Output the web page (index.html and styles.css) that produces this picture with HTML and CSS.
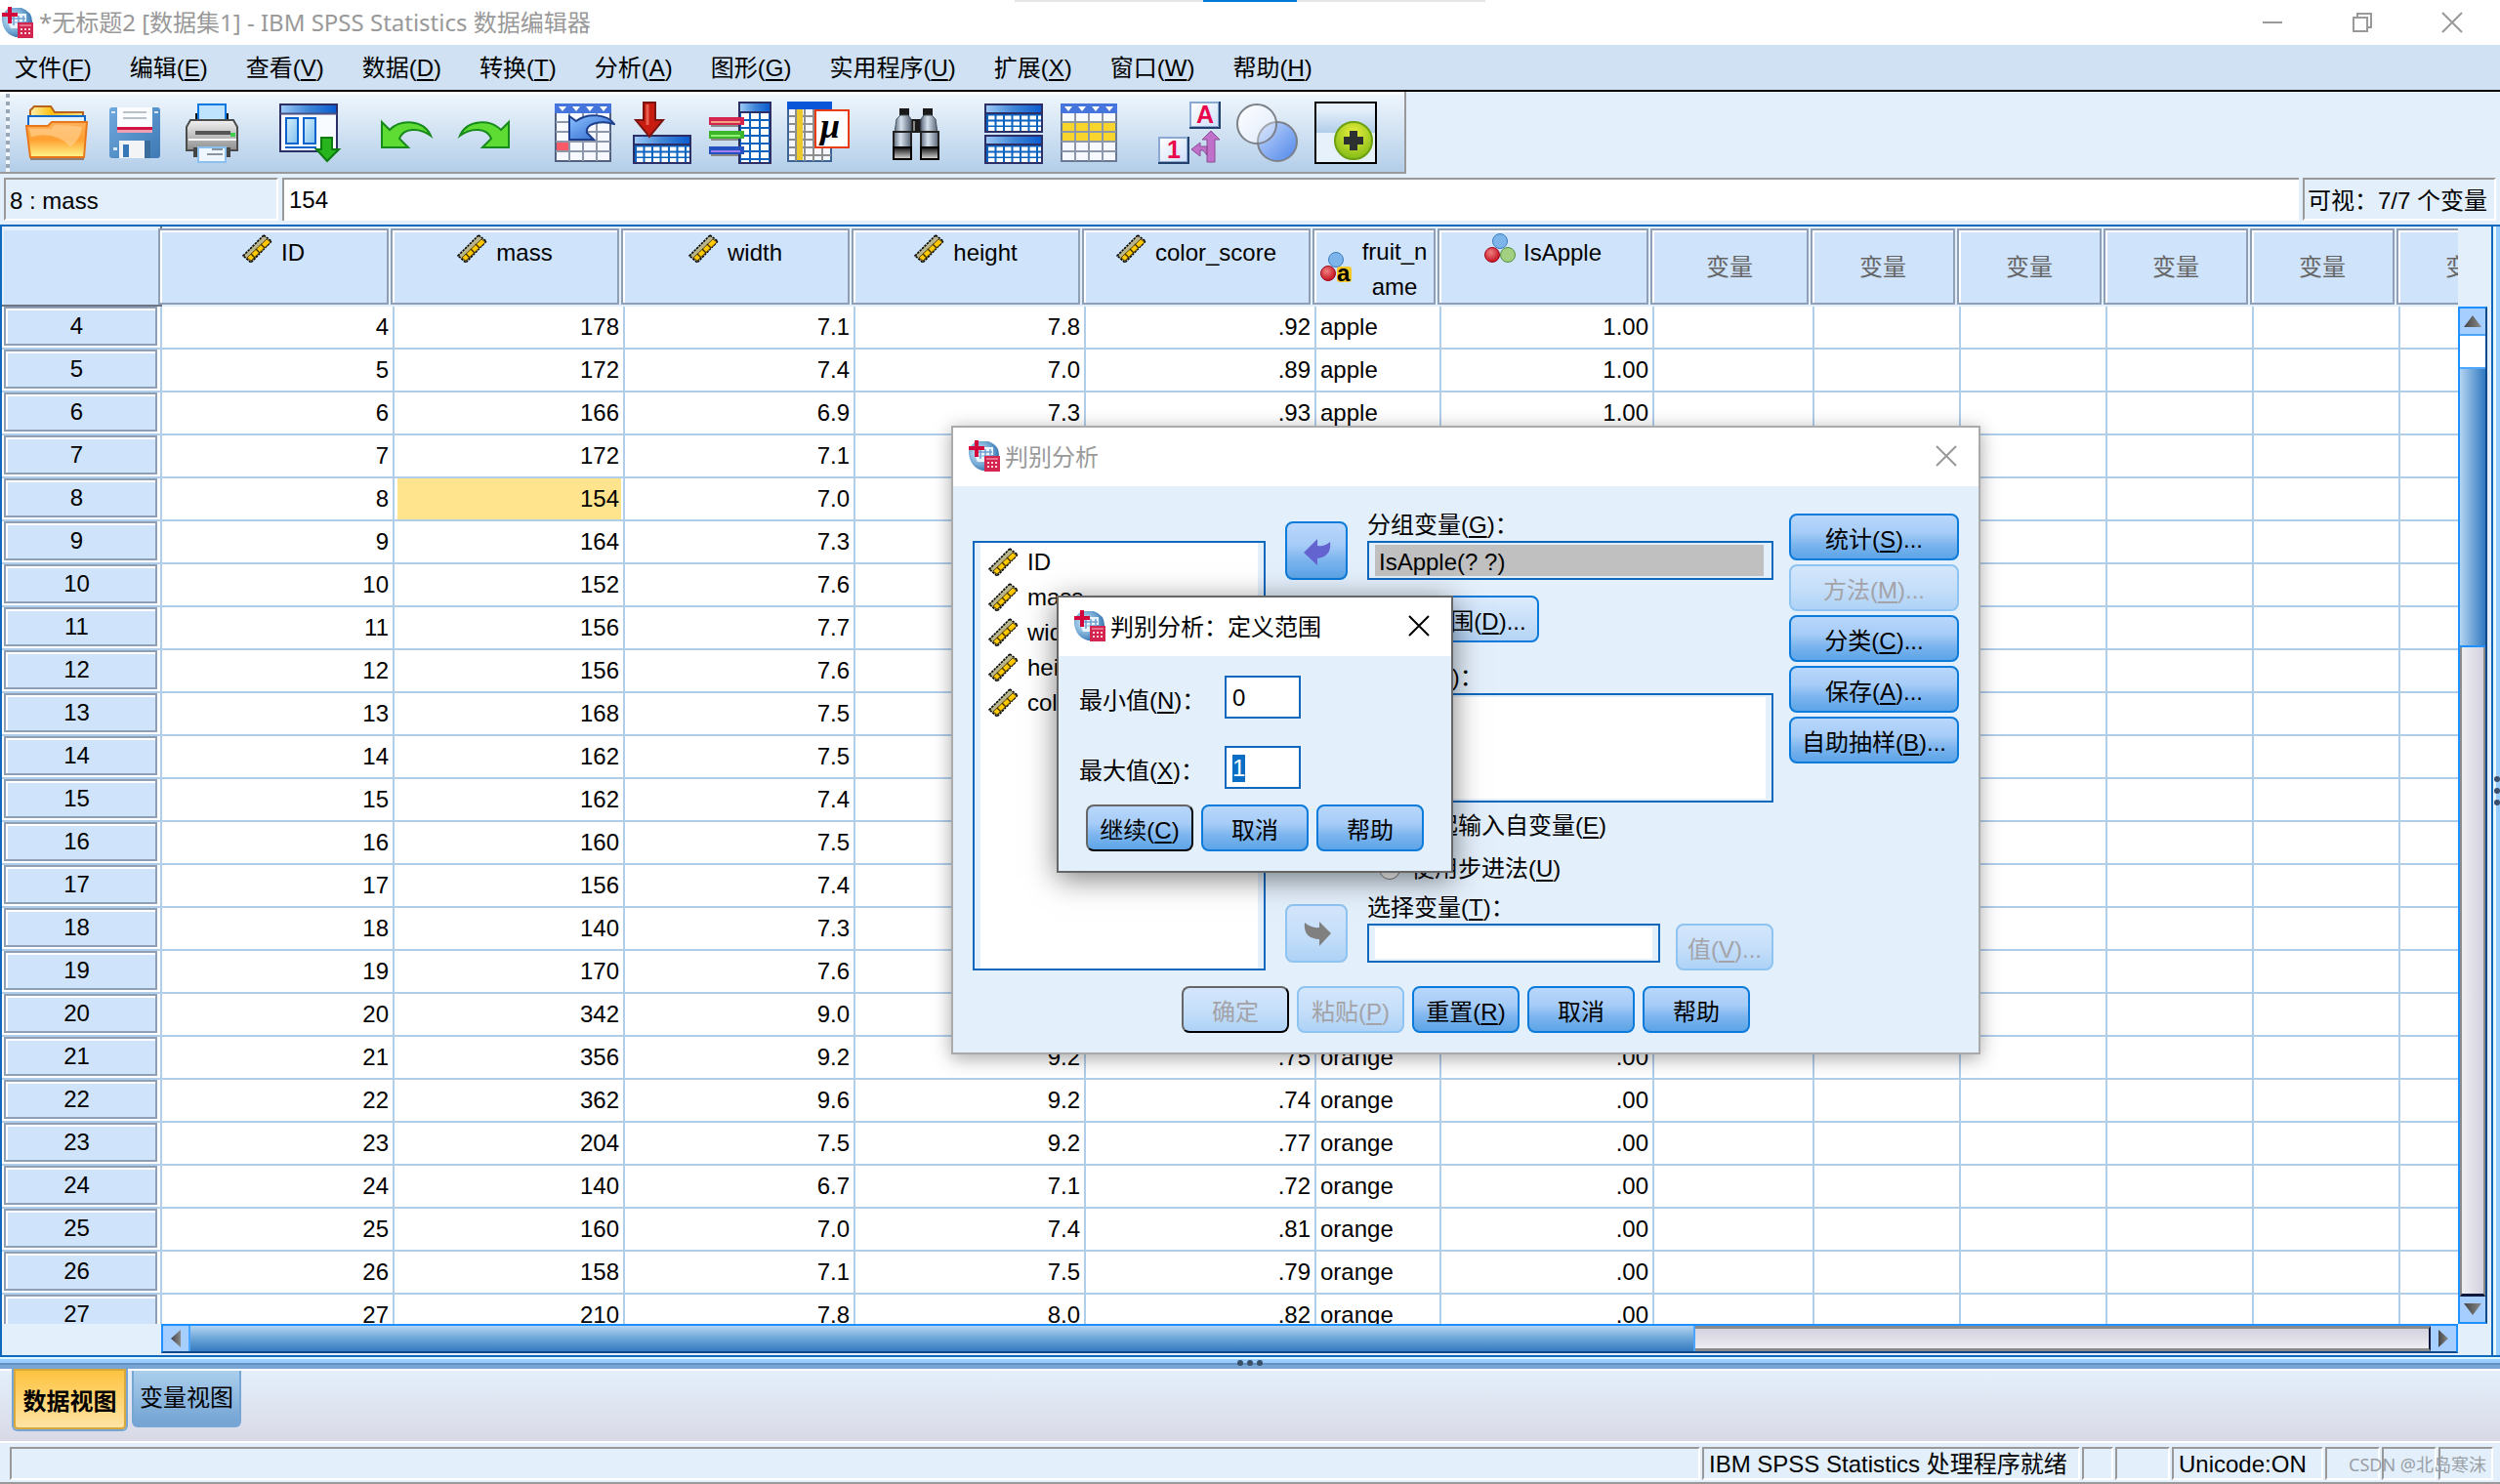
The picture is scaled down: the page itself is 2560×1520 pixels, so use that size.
FILE: index.html
```html
<!DOCTYPE html>
<html lang="zh-CN">
<head>
<meta charset="utf-8">
<title>*无标题2 [数据集1] - IBM SPSS Statistics 数据编辑器</title>
<link rel="stylesheet" href="styles.css">
</head>
<body>
<svg class="defs" aria-hidden="true">
  <defs>
    <linearGradient id="gHead" x1="0" y1="0" x2="1" y2="0"><stop offset="0" stop-color="#9cc8f6"/><stop offset=".5" stop-color="#3f86d8"/><stop offset="1" stop-color="#0a5cd0"/></linearGradient>
    <linearGradient id="gFolder" x1="0" y1="0" x2="0" y2="1"><stop offset="0" stop-color="#ffb05a"/><stop offset=".5" stop-color="#ffa030"/><stop offset="1" stop-color="#fff78c"/></linearGradient>
    <linearGradient id="gBack" x1="0" y1="0" x2="1" y2="0"><stop offset="0" stop-color="#fff0b0"/><stop offset=".4" stop-color="#ffc010"/><stop offset="1" stop-color="#ffe58a"/></linearGradient>
    <linearGradient id="gSave" x1="0" y1="0" x2="1" y2="1"><stop offset="0" stop-color="#6fa9dd"/><stop offset="1" stop-color="#3f79b5"/></linearGradient>
    <linearGradient id="gGrey" x1="0" y1="0" x2="0" y2="1"><stop offset="0" stop-color="#f2f2f2"/><stop offset="1" stop-color="#8e8e8e"/></linearGradient>
    <linearGradient id="gPane" x1="0" y1="0" x2="1" y2="1"><stop offset="0" stop-color="#d6effc"/><stop offset="1" stop-color="#7fc0ee"/></linearGradient>
    <linearGradient id="gTube" x1="0" y1="0" x2="1" y2="0"><stop offset="0" stop-color="#5d6a7c"/><stop offset=".4" stop-color="#d8e2ee"/><stop offset="1" stop-color="#566274"/></linearGradient>
    <linearGradient id="gEye" x1="0" y1="0" x2="0" y2="1"><stop offset="0" stop-color="#111"/><stop offset="1" stop-color="#ddd"/></linearGradient>
    <linearGradient id="gBlue" x1="0" y1="0" x2="1" y2="1"><stop offset="0" stop-color="#8fc2ff"/><stop offset="1" stop-color="#2260c8"/></linearGradient>
    <linearGradient id="gWhite" x1="0" y1="0" x2="1" y2="1"><stop offset="0" stop-color="#ffffff"/><stop offset="1" stop-color="#cfe0fa"/></linearGradient>
    <linearGradient id="gCirc" x1="0" y1="0" x2="1" y2="1"><stop offset="0" stop-color="#c4d8fb"/><stop offset="1" stop-color="#4f86ea"/></linearGradient>
    <linearGradient id="gSky" x1="0" y1="0" x2="0" y2="1"><stop offset="0" stop-color="#eaf3fc"/><stop offset="1" stop-color="#b0cdea"/></linearGradient>
    <linearGradient id="gArrow" x1="0" y1="0" x2="1" y2="0"><stop offset="0" stop-color="#444"/><stop offset="1" stop-color="#8a8a8a"/></linearGradient>
    <radialGradient id="gGlobe" cx=".35" cy=".4" r=".7"><stop offset="0" stop-color="#d8ecfa"/><stop offset=".6" stop-color="#6fa6d2"/><stop offset="1" stop-color="#2c6aa8"/></radialGradient>
    <radialGradient id="gLime" cx=".5" cy=".3" r=".7"><stop offset="0" stop-color="#e8ee3c"/><stop offset="1" stop-color="#84bc18"/></radialGradient>
    <radialGradient id="gRed" cx=".4" cy=".35" r=".7"><stop offset="0" stop-color="#f08080"/><stop offset="1" stop-color="#c00818"/></radialGradient>

    <symbol id="spss" viewBox="0 0 32 32">
      <path d="M7 1H20Q31 5 31 15V31H14Q2 28 0 14V8Z" fill="url(#gGlobe)"/>
      <path d="M11 7h14v8H6v-4h5zM7 17h9v5H9z" fill="#eaf4fc"/>
      <path d="M10 12h14M12 9v10M17 9v10M22 9v6" stroke="#6fa0d0" stroke-width="1.5"/>
      <path d="M6 0h4v6h6v4h-6v7H6v-7H0V6h6z" fill="#d2063a"/>
      <path d="M16 16h16v16H16z" fill="#d42450"/>
      <path d="M19 22h2v2h-2zM23 22h2v2h-2zM27 22h2v2h-2zM19 26h2v2h-2zM23 26h2v2h-2zM27 26h2v2h-2z" fill="#fbd3dc"/>
      <path d="M18 18h12v2H18z" fill="#e8708a"/>
    </symbol>
    <symbol id="ruler" viewBox="0 0 32 32">
      <path d="M22 2L30 8L9 30L1 23Z" fill="#b8b48c" stroke="#000" stroke-width="1.6" stroke-dasharray="2.4 1"/>
      <path d="M25 6L29 9L9 28L5 25Z" fill="#ffc800" stroke="#5a4600" stroke-width="1"/>
      <path d="M19 11l4 4M14 16l4 4M9 21l4 4" stroke="#3a3000" stroke-width="1.4"/>
    </symbol>
    <symbol id="nominal" viewBox="0 0 32 32">
      <circle cx="16" cy="8" r="7.5" fill="#7db4ea" stroke="#3c7cc0"/>
      <circle cx="8" cy="22" r="7.5" fill="url(#gRed)" stroke="#a00818"/>
      <circle cx="24" cy="22" r="7.5" fill="#a2d080" stroke="#4f9038"/>
    </symbol>
    <symbol id="nominalText" viewBox="0 0 32 32">
      <circle cx="16" cy="8" r="7.5" fill="#7db4ea" stroke="#3c7cc0"/>
      <circle cx="8" cy="22" r="7.5" fill="url(#gRed)" stroke="#a00818"/>
      <rect x="17" y="15" width="15" height="16" rx="3" fill="#f8c828"/>
      <text x="17" y="30" class="icon-a">a</text>
    </symbol>
    <symbol id="miniTable" viewBox="0 0 60 30">
      <rect x="1" y="1" width="58" height="28" fill="#0a62c0" stroke="#2b2f66" stroke-width="2"/>
      <rect x="2" y="2" width="56" height="8" fill="url(#gHead)"/>
      <path d="M2 10H58" stroke="#2b2f66" stroke-width="2"/>
      <path d="M4 14.500H58M4 20.500H58M4 26H58" stroke="#fff" stroke-width="4" stroke-dasharray="6.500 2"/>
    </symbol>
  </defs>
</svg>

<div class="app">
  <header class="titlebar">
    <svg class="app-icon"><use href="#spss"/></svg>
    <h1 class="title">*无标题2 [数据集1] - IBM SPSS Statistics 数据编辑器</h1>
    <div class="snap-hint"></div>
    <div class="window-controls">
      <button aria-label="最小化"><svg viewBox="0 0 20 20"><path d="M0 10H20"/></svg></button>
      <button aria-label="还原"><svg viewBox="0 0 20 20"><path d="M1 5H15V19H1ZM5 5V1H19V15H15"/></svg></button>
      <button aria-label="关闭"><svg viewBox="0 0 20 20"><path d="M0 0L20 20M20 0L0 20"/></svg></button>
    </div>
  </header>

  <nav class="menubar">
    <button>文件(<u>F</u>)</button>
    <button>编辑(<u>E</u>)</button>
    <button>查看(<u>V</u>)</button>
    <button>数据(<u>D</u>)</button>
    <button>转换(<u>T</u>)</button>
    <button>分析(<u>A</u>)</button>
    <button>图形(<u>G</u>)</button>
    <button>实用程序(<u>U</u>)</button>
    <button>扩展(<u>X</u>)</button>
    <button>窗口(<u>W</u>)</button>
    <button>帮助(<u>H</u>)</button>
  </nav>

  <div class="toolbar">
    <div class="tool-group">
      <button aria-label="打开"><svg viewBox="0 0 64 64">
        <path d="M5 30V9L9 5H26L30 11H59V30Z" fill="url(#gBack)" stroke="#b8621c" stroke-width="2"/>
        <path d="M3 15H61V30H3Z" fill="#e6f3fd" stroke="#1068cc" stroke-width="2"/>
        <path d="M1 25H23L27 21H63L60 57H5Z" fill="url(#gFolder)" stroke="#e8761a" stroke-width="2"/>
        <path d="M6 36Q30 30 46 46Q56 40 58 26Q46 24 30 24L26 28H4Z" fill="#ffd9a0" opacity=".55"/>
        <path d="M5 59H60" stroke="#7a5a40" stroke-width="2" opacity=".7"/>
      </svg></button>
      <button aria-label="保存"><svg viewBox="0 0 64 64">
        <rect x="6" y="6" width="52" height="52" rx="3" fill="url(#gSave)"/>
        <path d="M14 6H50V32H14Z" fill="#fafcff"/>
        <path d="M20 11H44M20 17H44" stroke="#b8c0c8" stroke-width="2"/>
        <path d="M14 26h36v3H14z" fill="#d01444"/><path d="M14 29h36v3H14z" fill="#f0a0b4"/>
        <path d="M8 10h4v2H8zM52 10h4v2h-4zM10 47h4v3h-4z" fill="#d8e8f6"/>
        <path d="M16 40H42V58H16Z" fill="#f2f4f6"/><path d="M42 40h6v18h-6z" fill="#3a6c9c"/><path d="M20 44h6v13h-6z" fill="#3878b8"/>
      </svg></button>
      <button aria-label="打印"><svg viewBox="0 0 64 64">
        <path d="M14 12h34v10H14z" fill="#111"/>
        <path d="M17 3H45V22H17Z" fill="#bfe3fc" stroke="#0a78e0" stroke-width="2"/>
        <path d="M9 19H53L57 26V50H5V26Z" fill="url(#gGrey)" stroke="#4c4c4c" stroke-width="2"/>
        <path d="M14 32H50" stroke="#555" stroke-width="4"/><path d="M7 39H56" stroke="#fafafa" stroke-width="2"/>
        <rect x="50" y="32" width="5" height="4" fill="#40d050"/>
        <path d="M12 47h38v10H12z" fill="#444"/>
        <path d="M17 47H45V62H17Z" fill="#eef7ff" stroke="#8cc0ee" stroke-width="2"/>
        <path d="M31 49H42M26 54H42" stroke="#8a94a0" stroke-width="2"/>
      </svg></button>
    </div>
    <div class="tool-group">
      <button aria-label="重新调用最近使用的对话框"><svg viewBox="0 0 64 64">
        <rect x="1" y="3" width="58" height="48" fill="#f8fbff" stroke="#2b2f66" stroke-width="2"/>
        <rect x="2" y="4" width="56" height="8" fill="url(#gHead)"/><path d="M1 12.500H59" stroke="#4a5080" stroke-width="2"/>
        <rect x="7" y="17" width="12" height="26" fill="url(#gPane)" stroke="#0a62cc" stroke-width="2"/>
        <rect x="25" y="17" width="12" height="26" fill="url(#gPane)" stroke="#0a62cc" stroke-width="2"/>
        <path d="M6 47H38" stroke="#0a62cc" stroke-width="2"/>
        <path d="M43 37H54V49H61L49 61L38 49H43Z" fill="#28b41c" stroke="#0c7c10" stroke-width="2"/>
      </svg></button>
    </div>
    <div class="tool-group">
      <button aria-label="撤销"><svg viewBox="0 0 64 64"><path d="M5 21L13 29C24 18 48 18 55 35C43 26 27 27 23 38L32 47H5Z" fill="#5edc34" stroke="#178a1c" stroke-width="2"/></svg></button>
      <button aria-label="重做"><svg viewBox="0 0 64 64"><path d="M55 21L47 29C36 18 12 18 5 35C17 26 33 27 37 38L28 47H55Z" fill="#5edc34" stroke="#178a1c" stroke-width="2"/></svg></button>
    </div>
    <div class="tool-group">
      <button aria-label="转到个案"><svg viewBox="0 0 64 64">
        <rect x="3" y="3" width="56" height="58" fill="#f6f9ff" stroke="#52627e" stroke-width="2"/>
        <rect x="2" y="2" width="58" height="10" fill="#4474dc"/>
        <path d="M6 5h8l-4 5zM20 5h8l-4 5zM34 5h8l-4 5zM48 5h8l-4 5z" fill="#fff"/>
        <path d="M3 21H59M3 31H59M3 41H59M3 51H59M17 12V61M31 12V61M45 12V61" stroke="#8c98aa" stroke-width="2"/>
        <rect x="4" y="42" width="12" height="8" fill="#f85a68"/>
        <path d="M17 15L24 20C36 11 56 13 63 23C50 19 33 22 35 32L42 39H17Z" fill="url(#gBlue)" stroke="#1c3e8c" stroke-width="2"/>
      </svg></button>
      <button aria-label="转到变量"><svg viewBox="0 0 64 64">
        <use href="#miniTable" x="2" y="34" width="60" height="30"/>
        <path d="M13 1H25V19H33L19 36L5 19H13Z" fill="#c81c10" stroke="#7c1410" stroke-width="2"/><path d="M17 3V24" stroke="#e86050" stroke-width="3"/>
      </svg></button>
      <button aria-label="变量"><svg viewBox="0 0 64 64">
        <rect x="31" y="1" width="32" height="62" fill="#0a62c0" stroke="#2b2f66" stroke-width="2"/>
        <rect x="32" y="2" width="30" height="8" fill="url(#gHead)"/><path d="M31 11H63" stroke="#2b2f66" stroke-width="2"/>
        <path d="M37 12V62M47 12V62M57 12V62" stroke="#fff" stroke-width="8" stroke-dasharray="6 2"/>
        <rect x="0" y="16" width="36" height="8" fill="#d42450"/><path d="M2 21H32" stroke="#f4a080" stroke-width="2"/>
        <rect x="0" y="30" width="36" height="8" fill="#3cb42c"/><path d="M2 35H32" stroke="#90f070" stroke-width="2"/>
        <rect x="0" y="46" width="36" height="8" fill="#2450c0"/><path d="M2 51H32" stroke="#a080f0" stroke-width="2"/>
        <path d="M2 25H30M2 39H30M2 55H30" stroke="#888" stroke-width="2"/>
      </svg></button>
      <button aria-label="描述统计"><svg viewBox="0 0 64 64">
        <rect x="1" y="1" width="44" height="60" fill="#f4f8fc" stroke="#3c6494" stroke-width="2"/>
        <rect x="0" y="0" width="46" height="8" fill="#0a56d8"/>
        <path d="M2 15H45M2 23H45M2 31H45M2 39H45M2 47H45M2 55H45M9 8V61M18 8V61M27 8V61M36 8V61" stroke="#8e8e8e" stroke-width="2"/>
        <path d="M13 8V60" stroke="#ecc82c" stroke-width="6"/>
        <rect x="29" y="9" width="34" height="38" fill="#fff" stroke="#e83c10" stroke-width="2"/>
        <text x="34" y="37" class="icon-mu">μ</text>
      </svg></button>
    </div>
    <div class="tool-group">
      <button aria-label="查找"><svg viewBox="0 0 64 64">
        <path d="M15 7H25V16H15ZM39 7H49V16H39ZM27 18H37V32H27Z" fill="#1a1a1a"/><path d="M30 20v10" stroke="#888" stroke-width="2"/>
        <path d="M12 18L16 14H24L27 18V32H10Z" fill="url(#gTube)" stroke="#4a5462"/><path d="M37 18L40 14H48L52 18L54 32H37Z" fill="url(#gTube)" stroke="#4a5462"/>
        <rect x="9" y="31" width="18" height="16" fill="url(#gTube)" stroke="#222" stroke-width="2"/><rect x="37" y="31" width="18" height="16" fill="url(#gTube)" stroke="#222" stroke-width="2"/>
        <rect x="9" y="47" width="18" height="12" fill="url(#gEye)" stroke="#000" stroke-width="2"/><rect x="37" y="47" width="18" height="12" fill="url(#gEye)" stroke="#000" stroke-width="2"/>
      </svg></button>
    </div>
    <div class="tool-group">
      <button aria-label="拆分文件"><svg viewBox="0 0 64 64"><use href="#miniTable" x="2" y="2" width="60" height="30"/><use href="#miniTable" x="2" y="34" width="60" height="30"/></svg></button>
      <button aria-label="选择个案"><svg viewBox="0 0 64 64">
        <rect x="1" y="3" width="56" height="58" fill="#f6f9ff" stroke="#6a7a94" stroke-width="2"/>
        <rect x="0" y="2" width="58" height="10" fill="#4474dc"/>
        <path d="M4 5h8l-4 5zM18 5h8l-4 5zM32 5h8l-4 5zM46 5h8l-4 5z" fill="#fff"/>
        <rect x="2" y="22" width="54" height="18" fill="#f8d42c"/>
        <path d="M1 21H57M1 31H57M1 41H57M1 51H57M15 12V61M29 12V61M43 12V61" stroke="#8c98aa" stroke-width="2"/>
      </svg></button>
    </div>
    <div class="tool-group">
      <button aria-label="值标签"><svg viewBox="0 0 64 64">
        <path d="M32 0H64V28H32Z" fill="#24406c"/><path d="M32 0H62V26H32Z" fill="#8aa8d0"/><path d="M34 2H61V25H34Z" fill="url(#gWhite)"/>
        <path d="M0 36H32V64H0Z" fill="#24406c"/><path d="M0 36H30V62H0Z" fill="#8aa8d0"/><path d="M2 38H29V61H2Z" fill="url(#gWhite)"/>
        <text x="39" y="22" class="icon-letter">A</text><text x="9" y="58" class="icon-letter">1</text>
        <path d="M50 62V39H45L54 30L63 39H58V62ZM50 55L46 50H43V56L34 49L43 42V46H50Z" fill="#c070c8" stroke="#8a4c98"/>
      </svg></button>
      <button aria-label="使用变量集"><svg viewBox="0 0 64 64">
        <circle cx="21" cy="23" r="20" fill="url(#gWhite)"/><circle cx="42" cy="41" r="20" fill="url(#gCirc)" stroke="#7c8088" stroke-width="2"/><circle cx="21" cy="23" r="20" fill="#fff" fill-opacity=".3" stroke="#7c8088" stroke-width="2"/>
      </svg></button>
      <button aria-label="定制工具栏"><svg viewBox="0 0 64 64">
        <rect x="1" y="1" width="62" height="62" fill="#e6f1fc" stroke="#000" stroke-width="2"/>
        <rect x="2" y="6" width="60" height="26" fill="url(#gSky)"/>
        <circle cx="40" cy="40" r="19" fill="url(#gLime)" stroke="#6ca010" stroke-width="2"/>
        <path d="M36 30h8v6h6v8h-6v6h-8v-6h-6v-8h6z" fill="#2c3030"/>
      </svg></button>
    </div>
  </div>

  <div class="cell-row">
    <output class="cell-ref">8 : mass</output>
    <input class="cell-value" aria-label="单元格值" value="154">
    <div class="cell-visible">可视：7/7 个变量</div>
  </div>

  <main class="pane">
    <div class="viewport">
      <table class="grid">
        <colgroup>
          <col class="c-row"><col class="c-id"><col class="c-num"><col class="c-num"><col class="c-num"><col class="c-num"><col class="c-name"><col class="c-flag"><col class="c-first"><col class="c-var"><col class="c-var"><col class="c-var"><col class="c-var"><col class="c-var">
        </colgroup>
        <thead>
          <tr>
            <td class="corner"></td>
            <th scope="col"><div class="col-head"><svg><use href="#ruler"/></svg><span>ID</span></div></th>
            <th scope="col"><div class="col-head"><svg><use href="#ruler"/></svg><span>mass</span></div></th>
            <th scope="col"><div class="col-head"><svg><use href="#ruler"/></svg><span>width</span></div></th>
            <th scope="col"><div class="col-head"><svg><use href="#ruler"/></svg><span>height</span></div></th>
            <th scope="col"><div class="col-head"><svg><use href="#ruler"/></svg><span>color_score</span></div></th>
            <th scope="col"><div class="col-head wrapped"><svg><use href="#nominalText"/></svg><span>fruit_n<wbr>ame</span></div></th>
            <th scope="col"><div class="col-head"><svg><use href="#nominal"/></svg><span>IsApple</span></div></th>
            <th scope="col"><div class="col-head unused">变量</div></th>
            <th scope="col"><div class="col-head unused">变量</div></th>
            <th scope="col"><div class="col-head unused">变量</div></th>
            <th scope="col"><div class="col-head unused">变量</div></th>
            <th scope="col"><div class="col-head unused">变量</div></th>
            <th scope="col"><div class="col-head unused">变量</div></th>
          </tr>
        </thead>
        <tbody id="cases"></tbody>
      </table>
    </div>
    <div class="vscroll">
      <button aria-label="向上滚动"><svg viewBox="0 0 20 12"><path d="M10 0L19 12H1Z"/></svg></button>
      <div class="v-before"></div>
      <div class="v-thumb"></div>
      <div class="v-track"></div>
      <button aria-label="向下滚动"><svg viewBox="0 0 20 12"><path d="M1 0H19L10 12Z"/></svg></button>
    </div>
    <div class="hscroll">
      <button aria-label="向左滚动"><svg viewBox="0 0 12 20"><path d="M11 1V19L1 10Z"/></svg></button>
      <div class="h-thumb"></div>
      <div class="h-track"></div>
      <button aria-label="向右滚动"><svg viewBox="0 0 12 20"><path d="M1 1V19L11 10Z"/></svg></button>
    </div>
    <div class="side-split"><i></i><i></i><i></i></div>
  </main>
  <div class="splitter"><i></i><i></i><i></i></div>

  <div class="tabs">
    <button class="tab active">数据视图</button>
    <button class="tab">变量视图</button>
  </div>

  <footer class="status">
    <div class="grow"></div>
    <div class="s-ready">IBM SPSS Statistics 处理程序就绪</div>
    <div class="s-small"></div>
    <div class="s-mid"></div>
    <div class="s-code">Unicode:ON</div>
    <div class="s-mid"></div>
    <div class="s-mid"></div>
    <div class="s-mid"></div>
    <span class="watermark">CSDN @北岛寒沫</span>
  </footer>
</div>

<section class="dialog discriminant" role="dialog" aria-label="判别分析">
  <header class="dialog-title">
    <svg class="app-icon"><use href="#spss"/></svg>
    <h2>判别分析</h2>
    <button aria-label="关闭"><svg viewBox="0 0 20 20"><path d="M0 0L20 20M20 0L0 20"/></svg></button>
  </header>
  <div class="dialog-body">
    <ul class="var-list">
      <li><svg><use href="#ruler"/></svg>ID</li>
      <li><svg><use href="#ruler"/></svg>mass</li>
      <li><svg><use href="#ruler"/></svg>width</li>
      <li><svg><use href="#ruler"/></svg>height</li>
      <li><svg><use href="#ruler"/></svg>color_score</li>
    </ul>
    <div class="movers">
      <button class="btn mover" aria-label="移出分组变量"><svg viewBox="0 0 28 28"><path d="M0 15L14 1V8Q22 9 27 4Q29 19 14 21V28Z"/></svg></button>
      <button class="btn mover" aria-label="移入选择变量" disabled><svg viewBox="0 0 28 28"><path d="M28 13L16 1V7Q8 8 1 2Q-1 18 16 19V26Z"/></svg></button>
    </div>
    <div class="targets">
      <label for="grouping">分组变量(<u>G</u>)：</label>
      <input class="box field chosen" id="grouping" value="IsApple(? ?)" readonly>
      <button class="btn range">定义范围(<u>D</u>)...</button>
      <label for="independents">自变量(<u>I</u>)：</label>
      <textarea class="box independents" id="independents" readonly></textarea>
      <label class="radio"><input type="radio" name="method" checked>一起输入自变量(<u>E</u>)</label>
      <label class="radio"><input type="radio" name="method">使用步进法(<u>U</u>)</label>
      <label for="selection">选择变量(<u>T</u>)：</label>
      <div class="selection-row">
        <input class="box field" id="selection" readonly>
        <button class="btn value" disabled>值(<u>V</u>)...</button>
      </div>
    </div>
    <div class="side-buttons">
      <button class="btn">统计(<u>S</u>)...</button>
      <button class="btn" disabled>方法(<u>M</u>)...</button>
      <button class="btn">分类(<u>C</u>)...</button>
      <button class="btn">保存(<u>A</u>)...</button>
      <button class="btn">自助抽样(<u>B</u>)...</button>
    </div>
  </div>
  <div class="dialog-actions">
    <button class="btn default" disabled>确定</button>
    <button class="btn" disabled>粘贴(<u>P</u>)</button>
    <button class="btn">重置(<u>R</u>)</button>
    <button class="btn">取消</button>
    <button class="btn">帮助</button>
  </div>
</section>

<section class="dialog define-range" role="dialog" aria-label="判别分析：定义范围">
  <header class="dialog-title">
    <svg class="app-icon"><use href="#spss"/></svg>
    <h2>判别分析：定义范围</h2>
    <button aria-label="关闭"><svg viewBox="0 0 20 20"><path d="M0 0L20 20M20 0L0 20"/></svg></button>
  </header>
  <div class="range-body">
    <label for="min">最小值(<u>N</u>)：</label><input id="min" value="0">
    <label for="max">最大值(<u>X</u>)：</label><input id="max" value="1">
  </div>
  <div class="dialog-actions">
    <button class="btn default">继续(<u>C</u>)</button>
    <button class="btn">取消</button>
    <button class="btn">帮助</button>
  </div>
</section>
<script src="app.js"></script>
</body>
</html>
```
FILE: styles.css
```css
* { box-sizing: border-box; }

body {
  margin: 0;
  overflow: hidden;
  background: #e3effb;
  color: #000;
  font: 24px/32px "Liberation Sans", "Noto Sans CJK SC", sans-serif;
}

button, input, textarea { margin: 0; padding: 0; font: inherit; color: inherit; }
button { border: 0; background: none; white-space: nowrap; }
u { text-underline-offset: 3px; text-decoration-thickness: 2px; }
.defs { position: absolute; width: 0; height: 0; }
.icon-a { font: bold 24px "Liberation Sans", sans-serif; }
.icon-mu { font: italic bold 36px "Liberation Serif", serif; }
.icon-letter { font: bold 25px "Liberation Sans", sans-serif; fill: #e8064c; }

.app { display: flex; flex-direction: column; height: 100vh; }

/* title bar */
.titlebar { display: flex; align-items: center; height: 46px; padding: 0 39px 0 2px; background: #fff; }
.app-icon { width: 32px; height: 32px; flex: none; }
.title { flex: 1; margin: 0 0 0 6px; font: 24px/32px "Noto Sans", "Noto Sans CJK SC", sans-serif; color: #999; }
.snap-hint {
  position: absolute; top: 0; left: 50%; width: 482px; height: 2px; margin-left: -241px;
  background: linear-gradient(90deg, #e6e6e6 40%, #0078d7 40%, #0078d7 60%, #e6e6e6 60%);
}
.window-controls { display: flex; gap: 72px; }
.window-controls svg, .dialog-title button svg { display: block; width: 20px; height: 20px; overflow: visible; fill: none; stroke: #999; stroke-width: 2; }

/* menu bar */
.menubar { display: flex; gap: 39px; height: 48px; padding: 2px 15px 0; background: #cfe1f2; border-bottom: 2px solid #000; }

/* toolbar */
.toolbar {
  display: flex; gap: 36px; align-self: flex-start; align-items: flex-start; height: 84px; padding: 10px 28px 0 26px;
  border: 2px solid #999; border-width: 0 2px 2px 0;
  background: linear-gradient(#fff 2px, #eef5fc 3px, #b3cee9);
}
.toolbar::before { content: ""; width: 4px; height: 80px; margin: -8px -20px 0 -20px; background: repeating-linear-gradient(#9aa8b6 0 4px, #eef5fc 4px 8px); }
.tool-group { display: flex; gap: 16px; }
.toolbar svg { display: block; width: 64px; height: 64px; }

/* cell editor row */
.cell-row { display: flex; gap: 4px; height: 52px; padding: 4px; }
.cell-ref, .cell-visible { border: 2px solid; border-color: #999 #fff #fff #999; padding: 6px 4px; white-space: nowrap; }
.cell-ref { width: 281px; }
.cell-value { flex: 1; border: 0; border-top: 2px solid #999; border-left: 2px solid #999; padding: 0 5px; background: #fff; }
.cell-visible { width: 198px; padding-left: 3px; }

/* data pane */
.pane {
  flex: 1; min-height: 0; display: grid;
  grid-template-columns: 163px minmax(0, 1fr) 30px 4px 9px;
  grid-template-rows: 82px minmax(0, 1fr) 30px 2px;
  border: 2px solid #1068bd; border-right: 0;
}
.viewport { grid-column: 1 / 3; grid-row: 1 / 3; overflow: hidden; }
.grid { border-collapse: separate; border-spacing: 0; table-layout: fixed; width: 2606px; background: #fff; }
.c-row { width: 164px; }
.c-id { width: 238px; }
.c-num { width: 236px; }
.c-name { width: 128px; }
.c-flag { width: 218px; }
.c-first { width: 164px; }
.c-var { width: 150px; }
.grid td, .grid th { padding: 0; font-weight: normal; }
.grid thead { background: #e3effb; }
.grid thead th { padding: 2px 6px 2px 0; vertical-align: top; }
.col-head {
  display: flex; justify-content: center; gap: 8px; height: 78px; margin-left: -4px; padding-top: 3px;
  border: 2px solid #8f9fb5; background: #cfe3fb; box-shadow: inset 2px 2px #fff;
}
.col-head svg { width: 32px; height: 32px; flex: none; }
.col-head span { padding-top: 4px; }
.wrapped { align-items: center; gap: 6px; line-height: 36px; padding: 2px 2px 0 6px; }
.wrapped span { min-width: 0; }
.unused { align-items: center; padding: 2px 0 0; color: #666; }
.corner { height: 82px; border: solid #6c7684; border-width: 0 2px 2px 0; background: #cfe3fb; box-shadow: inset 2px 4px #e3effb; }
.grid tbody td, .grid tbody th { height: 44px; border: solid #b0cdea; border-width: 0 2px 2px 0; }
.grid tbody td { padding: 0 4px; text-align: right; }
.grid tbody td.text { text-align: left; }
.grid tbody td.selected { background: #ffe38d; box-shadow: inset 3px 0 #fff, inset -2px 0 #fff; }
.row-head { height: 40px; margin: 0 3px 2px 2px; border: 2px solid #8f9fb5; background: #cfe3fb; box-shadow: inset 2px 2px #fff; padding-right: 8px; line-height: 36px; }

/* scroll bars */
.vscroll { grid-column: 3; grid-row: 2; display: flex; flex-direction: column; border: 2px solid #1e90ff; border-right-color: #0b4a8a; }
.hscroll { grid-column: 2; grid-row: 3; display: flex; border: 2px solid #1e90ff; border-bottom-color: #0b4a8a; }
.vscroll button, .hscroll button { display: flex; align-items: center; justify-content: center; flex: none; width: 26px; height: 26px; background: #a6ceff; }
.vscroll svg { width: 20px; height: 12px; fill: url(#gArrow); }
.hscroll svg { width: 12px; height: 20px; fill: url(#gArrow); }
.v-before { height: 36px; border-top: 2px solid #4aa5ff; border-bottom: 2px solid #4aa5ff; background: #fff; }
.v-thumb { flex: 29 0 0; background: linear-gradient(90deg, #b4d4f0, #2f78c0); border-bottom: 2px solid #1e90ff; }
.v-track { flex: 68 0 0; background: linear-gradient(90deg, #ededf2, #d3d1dd); border: solid #8a8a8a; border-width: 0 2px; border-bottom: 3px solid #101840; }
.h-thumb { flex: 672 0 0; background: linear-gradient(#b4d4f0, #6ba6d8 50%, #3579c0); border: solid #4aa5ff; border-width: 0 2px; }
.h-track { flex: 328 0 0; background: linear-gradient(#d3d1dd, #ededf2); border: solid #8a8a8a; border-width: 3px 0; border-right: 2px solid #101840; }
.side-split {
  grid-column: 5; grid-row: 1 / 5; display: flex; flex-direction: column; justify-content: center; align-items: flex-end; gap: 6px;
  border-left: 2px solid #1068bd; background: linear-gradient(90deg, #e8f8ff 3px, #99ccff 3px);
}
.side-split i, .splitter i { width: 6px; height: 6px; border-radius: 50%; background: #3a5068; }
.splitter {
  display: flex; flex: none; justify-content: center; align-items: flex-start; gap: 4px; height: 14px; padding-top: 3px;
  background: linear-gradient(#e0fbff 2px, #99ccff 2px, #99ccff 6px, #648fc0 6px, #648fc0 8px, #77a6d5 8px, #77a6d5 12px, #fff 12px);
}

/* view tabs */
.tabs { display: flex; gap: 4px; align-items: flex-start; height: 72px; flex: none; padding-left: 12px; background: linear-gradient(#e3effb, #d9d9e6); }
.tab { width: 112px; height: 58px; border: 2px solid #77a6d5; border-top: 0; border-radius: 0 0 6px 6px; background: linear-gradient(#abcfec, #77a6d5 90%); }
.tab.active { width: 119px; height: 64px; margin-top: -2px; padding-top: 6px; font-weight: bold; background: linear-gradient(#fdc23c, #ffe5a8); box-shadow: inset 0 0 0 2px #d8a83c; }

/* status bar */
.status { position: relative; display: flex; gap: 2px; height: 44px; flex: none; padding: 4px 7px 4px 10px; border-top: 2px solid #fff; border-bottom: 2px solid #999; line-height: 32px; }
.status div { height: 34px; border: 2px solid; border-color: #999 #fff #fff #999; padding-left: 5px; white-space: nowrap; }
.grow { flex: 1; }
.s-ready { width: 387px; }
.s-small { width: 32px; }
.s-mid { width: 56px; }
.s-code { width: 155px; }
.watermark { position: absolute; right: 14px; top: 6px; font: 18px/32px "Noto Sans", "Noto Sans CJK SC", sans-serif; color: #9a9fa6; }

/* dialogs */
.dialog { position: absolute; background: #e3effb; }
.dialog-title { display: flex; align-items: center; background: #fff; }
.dialog-title h2 { flex: 1; margin: 0 0 0 5px; font: 24px/32px "Noto Sans CJK SC", sans-serif; }
.discriminant { left: 974px; top: 436px; width: 1054px; border: 2px solid #aaa; box-shadow: 0 4px 18px rgba(0, 0, 0, .35); }
.discriminant .dialog-title { color: #999; }
.dialog-title { height: 60px; padding: 0 23px 2px 16px; }
.define-range { left: 1082px; top: 610px; width: 406px; border: 2px solid #666; box-shadow: 0 6px 28px rgba(0, 0, 0, .5); }
.define-range .dialog-title button svg { stroke: #000; }

.btn {
  width: 110px; height: 48px; padding-top: 5px; border: 2px solid #0a7adb; border-radius: 8px;
  background: linear-gradient(#b9d7fb, #a6ccf7 40%, #7fb6ef 65%, #5ca4e7);
}
.btn:disabled { border-color: #8fc3f1; color: #a3a3a8; background: linear-gradient(#d4e6fc, #c6dffa 50%, #aed2f6); }
.btn.default { border-color: #666 #000 #000 #666; }
.dialog-actions { display: flex; justify-content: center; gap: 8px; padding: 16px 0 20px; }

.dialog-body { display: flex; height: 496px; padding: 0 20px; }
.box { display: block; border: 2px solid #1068bd; background: #fff; box-shadow: inset 0 0 0 2px #e3effb, inset 6px 0 #e3effb, inset -6px 0 #e3effb; resize: none; outline: 0; }
.var-list { width: 300px; height: 440px; margin: 56px 20px 0 0; padding: 2px 14px; list-style: none; border: 2px solid #1068bd; background: #fff; box-shadow: inset 6px 0 #e3effb, inset -6px 0 #e3effb; }
.var-list li { display: flex; align-items: center; gap: 8px; height: 36px; }
.var-list svg { width: 32px; height: 32px; }
.movers { display: flex; flex-direction: column; justify-content: space-between; margin: 36px 20px 8px 0; }
.mover { display: flex; align-items: center; justify-content: center; width: 64px; height: 60px; padding: 2px 0 0 2px; }
.mover svg { width: 28px; height: 28px; fill: #6464d0; }
.mover:disabled svg { fill: #808080; }
.targets { display: flex; flex-direction: column; width: 416px; margin-right: 16px; padding-top: 28px; }
.targets label { height: 24px; margin-bottom: 4px; line-height: 24px; }
.field { width: 100%; height: 40px; padding: 4px 10px 0; }
.chosen { background: #c0c0c0; box-shadow: inset 0 0 0 2px #e3effb, inset 6px 0 #e3effb, inset -8px 0 #e3effb; }
.range { width: 176px; margin: 16px 0 24px; background: linear-gradient(#dcebfc, #b4d4f6); }
.independents { width: 100%; height: 112px; margin-bottom: 12px; }
.targets .radio { display: flex; align-items: center; margin: 0 0 20px; padding-left: 12px; }
.targets .radio + .radio { margin-bottom: 16px; }
.radio input { width: 22px; height: 22px; margin-right: 11px; }
.selection-row { display: flex; gap: 16px; }
.selection-row .field { width: 300px; }
.value { width: 100px; }
.side-buttons { display: flex; flex-direction: column; gap: 4px; padding-top: 28px; }
.side-buttons .btn { width: 174px; }

.range-body { display: grid; grid-template-columns: 149px 78px; row-gap: 28px; align-items: center; padding: 20px 21px 0; }
.range-body label { padding-top: 8px; white-space: nowrap; }
.range-body input { height: 44px; padding: 2px 6px 0; border: 2px solid #1068bd; background: #fff; outline: 0; }
.range-body input::selection { background: #0a6fc4; color: #fff; }
```
FILE: app.js
```js
// case number, mass, width, height, color_score, fruit_name, IsApple
const cases = [
  [4, 178, '7.1', '7.8', '.92', 'apple', '1.00'],
  [5, 172, '7.4', '7.0', '.89', 'apple', '1.00'],
  [6, 166, '6.9', '7.3', '.93', 'apple', '1.00'],
  [7, 172, '7.1', '7.6', '.92', 'apple', '1.00'],
  [8, 154, '7.0', '7.1', '.88', 'apple', '1.00'],
  [9, 164, '7.3', '7.7', '.70', 'apple', '1.00'],
  [10, 152, '7.6', '7.3', '.69', 'apple', '1.00'],
  [11, 156, '7.7', '7.1', '.69', 'apple', '1.00'],
  [12, 156, '7.6', '7.5', '.67', 'apple', '1.00'],
  [13, 168, '7.5', '7.6', '.73', 'apple', '1.00'],
  [14, 162, '7.5', '7.1', '.83', 'apple', '1.00'],
  [15, 162, '7.4', '7.2', '.85', 'apple', '1.00'],
  [16, 160, '7.5', '7.5', '.86', 'apple', '1.00'],
  [17, 156, '7.4', '7.4', '.84', 'apple', '1.00'],
  [18, 140, '7.3', '7.1', '.87', 'apple', '1.00'],
  [19, 170, '7.6', '7.9', '.88', 'apple', '1.00'],
  [20, 342, '9.0', '9.4', '.75', 'orange', '.00'],
  [21, 356, '9.2', '9.2', '.75', 'orange', '.00'],
  [22, 362, '9.6', '9.2', '.74', 'orange', '.00'],
  [23, 204, '7.5', '9.2', '.77', 'orange', '.00'],
  [24, 140, '6.7', '7.1', '.72', 'orange', '.00'],
  [25, 160, '7.0', '7.4', '.81', 'orange', '.00'],
  [26, 158, '7.1', '7.5', '.79', 'orange', '.00'],
  [27, 210, '7.8', '8.0', '.82', 'orange', '.00'],
];
const unusedColumns = 6;
const body = document.getElementById('cases');

for (const values of cases) {
  const row = body.insertRow();
  const head = document.createElement('th');
  head.scope = 'row';
  head.innerHTML = `<div class="row-head">${values[0]}</div>`;
  row.append(head);
  values.forEach((value, i) => {
    const cell = row.insertCell();
    cell.textContent = value;
    if (i === 5) cell.className = 'text';
    if (i === 1 && values[0] === 8) cell.className = 'selected';
  });
  for (let i = 0; i < unusedColumns; i++) row.insertCell();
}

document.getElementById('max').select();
```
